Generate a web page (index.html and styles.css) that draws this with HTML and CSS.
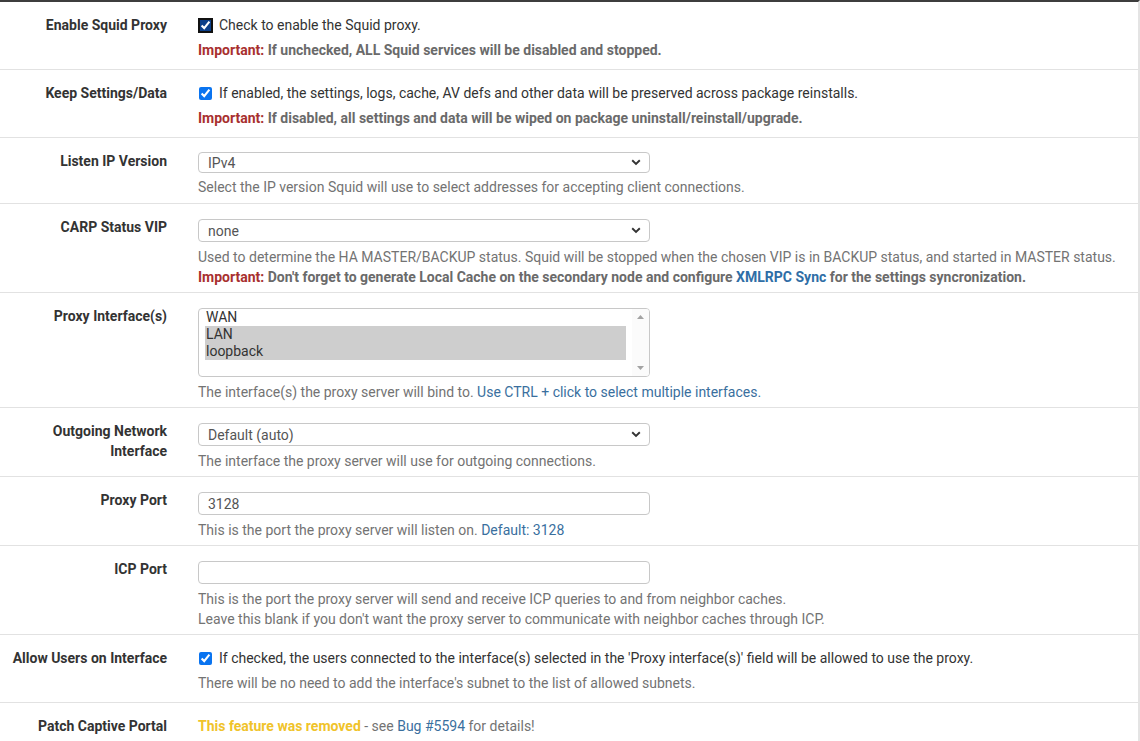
FILE: index.html
```html
<!DOCTYPE html>
<html lang="en">
<head>
<meta charset="utf-8">
<title>Squid Proxy Settings</title>
<link rel="stylesheet" href="styles.css">
</head>
<body>
<div class="panel">
  <div class="form-group check-row">
    <div class="col-label">Enable Squid Proxy</div>
    <div class="col-content">
      <label class="checkbox"><input type="checkbox" class="focused" checked><span>Check to enable the Squid proxy.</span></label>
      <span class="help-block"><strong class="important">Important:</strong> <strong>If unchecked, ALL Squid services will be disabled and stopped.</strong></span>
    </div>
  </div>

  <div class="form-group check-row">
    <div class="col-label">Keep Settings/Data</div>
    <div class="col-content">
      <label class="checkbox"><input type="checkbox" checked><span>If enabled, the settings, logs, cache, AV defs and other data will be preserved across package reinstalls.</span></label>
      <span class="help-block"><strong class="important">Important:</strong> <strong>If disabled, all settings and data will be wiped on package uninstall/reinstall/upgrade.</strong></span>
    </div>
  </div>

  <div class="form-group compact">
    <div class="col-label">Listen IP Version</div>
    <div class="col-content">
      <div class="select-wrap">
        <select class="form-control"><option>IPv4</option><option>IPv6</option></select>
        <svg class="chev" width="10" height="7" viewBox="0 0 10 7"><path d="M1.2 1.3 L5 5 L8.8 1.3" fill="none" stroke="#333" stroke-width="1.9"/></svg>
      </div>
      <span class="help-block">Select the IP version Squid will use to select addresses for accepting client connections.</span>
    </div>
  </div>

  <div class="form-group">
    <div class="col-label">CARP Status VIP</div>
    <div class="col-content">
      <div class="select-wrap">
        <select class="form-control"><option>none</option></select>
        <svg class="chev" width="10" height="7" viewBox="0 0 10 7"><path d="M1.2 1.3 L5 5 L8.8 1.3" fill="none" stroke="#333" stroke-width="1.9"/></svg>
      </div>
      <span class="help-block">Used to determine the HA MASTER/BACKUP status. Squid will be stopped when the chosen VIP is in BACKUP status, and started in MASTER status.<br><strong class="important">Important:</strong> <strong>Don't forget to generate Local Cache on the secondary node and configure <a href="#" class="link">XMLRPC Sync</a> for the settings syncronization.</strong></span>
    </div>
  </div>

  <div class="form-group">
    <div class="col-label">Proxy Interface(s)</div>
    <div class="col-content">
      <div class="listbox" role="listbox" aria-multiselectable="true">
        <ul class="options">
          <li role="option">WAN</li>
          <li role="option" class="selected">LAN</li>
          <li role="option" class="selected">loopback</li>
        </ul>
        <div class="scrollbar">
          <svg width="7" height="4" viewBox="0 0 7 4"><path d="M0 4 L3.5 0 L7 4 Z" fill="#a3a3a3"/></svg>
          <svg width="7" height="4" viewBox="0 0 7 4"><path d="M0 0 L3.5 4 L7 0 Z" fill="#a3a3a3"/></svg>
        </div>
      </div>
      <span class="help-block">The interface(s) the proxy server will bind to. <a href="#" class="link plain">Use CTRL + click to select multiple interfaces.</a></span>
    </div>
  </div>

  <div class="form-group">
    <div class="col-label">Outgoing Network<br>Interface</div>
    <div class="col-content">
      <div class="select-wrap">
        <select class="form-control"><option>Default (auto)</option></select>
        <svg class="chev" width="10" height="7" viewBox="0 0 10 7"><path d="M1.2 1.3 L5 5 L8.8 1.3" fill="none" stroke="#333" stroke-width="1.9"/></svg>
      </div>
      <span class="help-block">The interface the proxy server will use for outgoing connections.</span>
    </div>
  </div>

  <div class="form-group">
    <div class="col-label">Proxy Port</div>
    <div class="col-content">
      <input type="text" class="form-control" value="3128">
      <span class="help-block">This is the port the proxy server will listen on. <a href="#" class="link plain">Default: 3128</a></span>
    </div>
  </div>

  <div class="form-group">
    <div class="col-label">ICP Port</div>
    <div class="col-content">
      <input type="text" class="form-control" value="">
      <span class="help-block">This is the port the proxy server will send and receive ICP queries to and from neighbor caches.<br>Leave this blank if you don't want the proxy server to communicate with neighbor caches through ICP.</span>
    </div>
  </div>

  <div class="form-group check-row">
    <div class="col-label">Allow Users on Interface</div>
    <div class="col-content">
      <label class="checkbox"><input type="checkbox" checked><span>If checked, the users connected to the interface(s) selected in the 'Proxy interface(s)' field will be allowed to use the proxy.</span></label>
      <span class="help-block">There will be no need to add the interface's subnet to the list of allowed subnets.</span>
    </div>
  </div>

  <div class="form-group check-row last">
    <div class="col-label">Patch Captive Portal</div>
    <div class="col-content">
      <span class="static"><strong class="warning">This feature was removed</strong> - see <a href="#" class="link plain">Bug #5594</a> for details!</span>
    </div>
  </div>
</div>
</body>
</html>
```

FILE: styles.css
```css
* {
  box-sizing: border-box;
}

html, body {
  margin: 0;
  padding: 0;
  background: #ffffff;
}

body {
  font-family: Roboto, "Helvetica Neue", Arial, sans-serif;
  font-size: 14px;
  line-height: 20px;
  color: #333333;
}

.panel {
  width: 1140px;
  border-top: 2px solid #3d3d3d;
  border-right: 2px solid #e4e4e4;
}

.form-group {
  display: grid;
  grid-template-columns: 182px 1fr;
  border-bottom: 1px solid #e2e2e2;
}

.form-group.last {
  border-bottom: none;
}

.col-label {
  padding: 13px 15px 0 0;
  text-align: right;
  font-weight: bold;
  color: #333333;
}

.col-content {
  padding: 15px 0 5px 16px;
}

.check-row .col-content {
  padding: 13px 0 9px 16px;
}

.compact .col-content {
  padding: 14px 0 6px 16px;
}

.compact .form-control {
  height: 21px;
}

.compact .chev {
  top: 7px;
}

.compact .help-block {
  margin-top: 4px;
}

.checkbox {
  display: flex;
  align-items: center;
  gap: 7px;
  color: #333333;
}

.checkbox input {
  width: 13px;
  height: 13px;
  margin: 0 0 0 1px;
  accent-color: #0a74f0;
}

.checkbox input.focused {
  outline: 2px solid #111111;
  outline-offset: -1px;
  border-radius: 3px;
  accent-color: #0b3f8a;
}

.help-block {
  display: block;
  margin-top: 5px;
  color: #737373;
}

.help-block strong {
  color: #6a6a6a;
}

.help-block strong.important {
  color: #a8302f;
}

.link {
  color: #2f6ea6;
  text-decoration: none;
}

.help-block strong .link {
  color: #2f6ea6;
}

.link.plain {
  color: #3a6f9e;
}

.select-wrap {
  position: relative;
  width: 452px;
}

.form-control {
  display: block;
  width: 452px;
  height: 23px;
  padding: 0 9px;
  border: 1px solid #c8c8c8;
  border-radius: 4px;
  background: #ffffff;
  font-family: Roboto, "Helvetica Neue", Arial, sans-serif;
  font-size: 14px;
  color: #555555;
  outline: none;
}

select.form-control {
  appearance: none;
  -webkit-appearance: none;
}

.chev {
  position: absolute;
  right: 9px;
  top: 8px;
  pointer-events: none;
}

.listbox {
  display: flex;
  width: 452px;
  height: 69px;
  border: 1px solid #c8c8c8;
  border-radius: 4px;
  background: #ffffff;
}

.options {
  list-style: none;
  margin: 0 0 0 6px;
  padding: 0;
  width: 421px;
}

.options li {
  height: 17px;
  line-height: 17px;
  padding-left: 1px;
  color: #333333;
}

.options li.selected {
  background: #cecece;
}

.scrollbar {
  margin-left: auto;
  width: 17px;
  display: flex;
  flex-direction: column;
  justify-content: space-between;
  align-items: center;
  padding: 6px 0 6px;
  background: #fbfbfb;
  border-radius: 0 3px 3px 0;
}

.static {
  color: #737373;
}

.warning {
  color: #f0c32a;
}
```
